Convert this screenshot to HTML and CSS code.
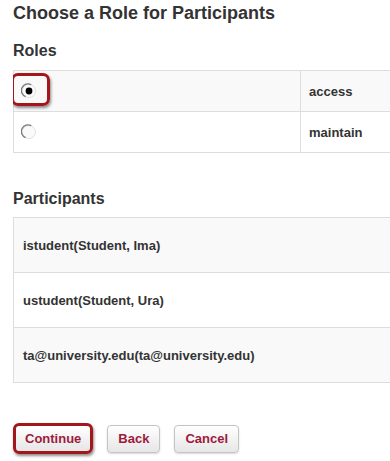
FILE: index.html
```html
<!DOCTYPE html>
<html lang="en">
  <head>
    <meta charset="UTF-8" />
    <meta name="viewport" content="width=device-width, initial-scale=1.0" />
    <title>Choose a Role for Participants</title>
    <link rel="stylesheet" href="styles.css">
  </head>
  <body>
    <h1 class="page-title">Choose a Role for Participants</h1>

    <!-- Ruoli -->
    <h2 class="section-title">Roles</h2>
    <div class="table-wrap">
      <table class="list roles">
        <tr class="striped">
          <td class="radio-cell">
            <span class="radio callout">
              <svg width="16" height="16" viewBox="0 0 16 16">
                <circle cx="8" cy="8" r="6.6" fill="#fafafa" stroke="#e2e2e2" stroke-width="1" />
                <path d="M10.26 1.8 A6.6 6.6 0 1 0 4.7 13.72" fill="none" stroke="#7a7a7a" stroke-width="1.3" />
                <circle cx="8" cy="8" r="3.4" fill="#000" />
              </svg>
            </span>
          </td>
          <td class="role-name">access</td>
        </tr>
        <tr>
          <td class="radio-cell">
            <span class="radio">
              <svg width="16" height="16" viewBox="0 0 16 16">
                <circle cx="8" cy="8" r="6.6" fill="#fafafa" stroke="#e2e2e2" stroke-width="1" />
                <path d="M10.26 1.8 A6.6 6.6 0 1 0 4.7 13.72" fill="none" stroke="#7a7a7a" stroke-width="1.3" />
              </svg>
            </span>
          </td>
          <td class="role-name">maintain</td>
        </tr>
      </table>
    </div>

    <!-- Partecipanti -->
    <h2 class="section-title participants-title">Participants</h2>
    <div class="table-wrap participants-wrap">
      <table class="list participants">
        <tr class="striped"><td>istudent(Student, Ima)</td></tr>
        <tr><td>ustudent(Student, Ura)</td></tr>
        <tr class="striped"><td>ta@university.edu(ta@university.edu)</td></tr>
      </table>
    </div>

    <div class="actions">
      <button class="btn btn-callout">Continue</button>
      <button class="btn">Back</button>
      <button class="btn">Cancel</button>
    </div>
  </body>
</html>
```

FILE: styles.css
```css
body,
html {
  margin: 0;
  padding: 0;
  width: 100%;
  height: 100%;
  overflow: hidden;
  background: #fff;
  color: #333;
  font-family: "Liberation Sans", Arial, sans-serif;
}

body {
  padding: 0 13px;
  box-sizing: border-box;
}

.page-title {
  margin: 2px 0 0;
  font-size: 18px;
  line-height: 22px;
  font-weight: bold;
}

.section-title {
  margin: 17px 0 0;
  font-size: 16px;
  line-height: 20px;
  font-weight: bold;
}

.participants-title {
  margin-top: 36px;
}

/* Le tabelle continuano oltre il bordo destro */
.table-wrap {
  margin-top: 9px;
  margin-right: -13px;
  overflow: hidden;
}

.participants-wrap {
  margin-top: 8px;
}

.list {
  width: 420px;
  border-collapse: collapse;
  border: 1px solid #ddd;
  font-size: 13px;
  font-weight: bold;
}

.list td {
  border: 1px solid #ddd;
  padding: 0 8px;
}

.list .striped {
  background-color: #f9f9f9;
}

.roles td {
  height: 40px;
}

.roles .radio-cell {
  width: 271px;
  padding-left: 7px;
}

.radio {
  position: relative;
  display: inline-block;
  width: 16px;
  height: 16px;
  vertical-align: middle;
}

.radio svg {
  display: block;
}

/* Riquadro rosso di evidenziazione */
.callout::after {
  content: "";
  position: absolute;
  left: -10px;
  right: -13px;
  top: -10px;
  bottom: -7px;
  border: 3px solid #a3161c;
  border-radius: 7px;
  box-shadow: 1px 2px 3px rgba(0, 0, 0, 0.45);
}

.participants td {
  height: 54px;
  padding-left: 9px;
}

/* Pulsanti */
.actions {
  display: flex;
  align-items: center;
  gap: 14px;
  margin-top: 40px;
}

.btn {
  height: 28px;
  padding: 0 10px;
  font-family: "Liberation Sans", Arial, sans-serif;
  font-size: 13px;
  font-weight: bold;
  color: #9e1a3c;
  background: linear-gradient(#ffffff, #e6e6e6);
  border: 1px solid #c4c4c4;
  border-radius: 4px;
  box-shadow: 0 1px 2px rgba(0, 0, 0, 0.15);
  cursor: pointer;
}

.btn-callout {
  height: 31px;
  padding: 0 9px;
  border: 3px solid #a3161c;
  border-radius: 6px;
  box-shadow: 1px 2px 3px rgba(0, 0, 0, 0.45);
}
```
